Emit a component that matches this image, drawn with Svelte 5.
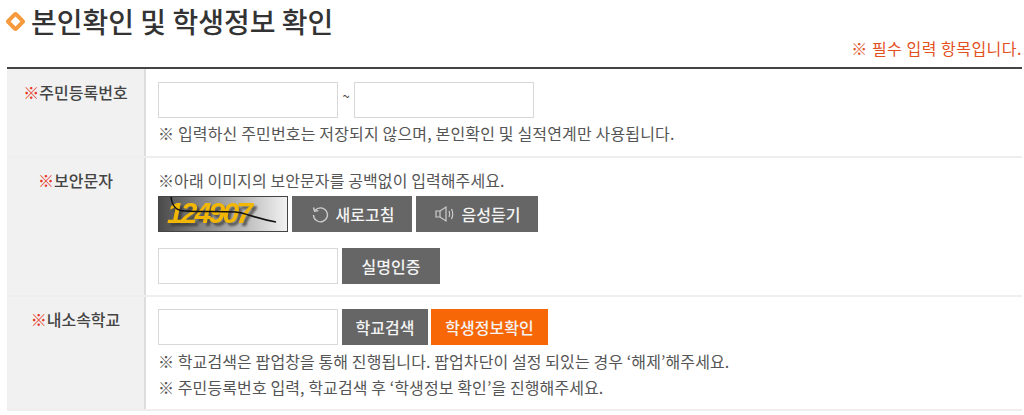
<script>
  const captchaCode = '124907';
</script>

<div class="page">
  <h2 class="title">
    <span class="bullet"></span>본인확인 및 학생정보 확인
  </h2>
  <p class="required">※ 필수 입력 항목입니다.</p>

  <div class="table">
    <div class="row row1">
      <div class="head"><em>※</em>주민등록번호</div>
      <div class="body">
        <div class="line">
          <input class="input" />
          <span class="tilde">~</span>
          <input class="input" />
        </div>
        <p class="note first">※ 입력하신 주민번호는 저장되지 않으며, 본인확인 및 실적연계만 사용됩니다.</p>
      </div>
    </div>

    <div class="row row2">
      <div class="head"><em>※</em>보안문자</div>
      <div class="body">
        <p class="note top">※아래 이미지의 보안문자를 공백없이 입력해주세요.</p>
        <div class="line captchaLine">
          <svg class="captcha" width="130" height="36" viewBox="0 0 130 36">
            <defs>
              <linearGradient id="capBg" x1="0" x2="1" y1="0" y2="0">
                <stop offset="0" stop-color="#4a4a4a" />
                <stop offset="0.5" stop-color="#a0a0a0" />
                <stop offset="1" stop-color="#f2f2f2" />
              </linearGradient>
            </defs>
            <rect x="0.5" y="0.5" width="129" height="35" fill="url(#capBg)" stroke="#444" />
            <text class="capText" x="9" y="27" textLength="86">{captchaCode}</text>
            <path d="M13 1 C14 9 17 15 27 15 C45 16 60 15 78 16 C88 17 96 22 118 26" fill="none" stroke="#111" stroke-width="1.6" />
          </svg>
          <button class="btn gray refresh">
            <svg width="20" height="20" viewBox="0 0 20 20" fill="none" stroke="#ccc" stroke-width="1.4">
              <path d="M5 6.5 A7 7 0 1 1 3.5 11" />
              <path d="M3.5 3.5 L4.6 7.2 L8.4 6.6" />
            </svg>
            새로고침
          </button>
          <button class="btn gray listen">
            <svg width="22" height="18" viewBox="0 0 22 18" fill="none" stroke="#ccc" stroke-width="1.2">
              <path d="M2 6 H6 L12 2 V16 L6 12 H2 Z" />
              <path d="M6 6 V12" />
              <path d="M15 6 Q16.5 9 15 12" />
              <path d="M17.5 4 Q20 9 17.5 14" />
            </svg>
            음성듣기
          </button>
        </div>
        <div class="line verify">
          <input class="input" />
          <button class="btn gray verifyBtn">실명인증</button>
        </div>
      </div>
    </div>

    <div class="row row3">
      <div class="head"><em>※</em>내소속학교</div>
      <div class="body">
        <div class="line school">
          <input class="input" />
          <button class="btn gray searchBtn">학교검색</button>
          <button class="btn orange">학생정보확인</button>
        </div>
        <p class="note second">※ 학교검색은 팝업창을 통해 진행됩니다. 팝업차단이 설정 되있는 경우 ‘해제’해주세요.</p>
        <p class="note third">※ 주민등록번호 입력, 학교검색 후 ‘학생정보 확인’을 진행해주세요.</p>
      </div>
    </div>
  </div>
</div>

<style>
  :global(body) {
    margin: 0;
    background: #fff;
    font-family: "Noto Sans CJK KR", "Noto Sans", sans-serif;
  }

  .page {
    width: 1024px;
    height: 415px;
    padding: 0 2px 0 7px;
    box-sizing: border-box;
    overflow: hidden;
    color: #444;
  }

  .title {
    display: flex;
    align-items: center;
    gap: 8px;
    margin: 0;
    height: 42px;
    font-size: 28px;
    font-weight: 500;
    letter-spacing: 0;
    color: #333;
  }
  .bullet {
    width: 7px;
    height: 7px;
    margin-left: 1px;
    border: 4px solid #f79a3e;
    background: #fff;
    transform: rotate(45deg);
    border-radius: 3px;
  }

  .required {
    margin: 0;
    height: 25px;
    line-height: 12px;
    text-align: right;
    font-size: 16px;
    letter-spacing: 0.5px;
    color: #e2501e;
  }

  .table { border-top: 2px solid #444; }

  .row {
    display: flex;
    border-bottom: 2px solid #eee;
    box-sizing: border-box;
  }
  .row1 { height: 89px; }
  .row2 { height: 139px; }
  .row3 { height: 114px; }

  .head {
    width: 139px;
    flex: none;
    box-sizing: border-box;
    background: #f1f1f1;
    border-right: 2px solid #ddd;
    text-align: center;
    font-size: 16px;
    font-weight: 500;
    color: #444;
    padding-top: 12px;
    line-height: 22px;
  }
  .row2 .head, .row3 .head { padding-top: 11px; }
  .head em {
    font-style: normal;
    color: #e8331c;
  }

  .body {
    flex: 1;
    padding: 13px 0 0 12px;
  }
  .row3 .body { padding-top: 12px; }

  .line {
    display: flex;
    align-items: center;
    gap: 3px;
  }

  .input {
    width: 180px;
    height: 36px;
    margin: 0;
    padding: 0;
    box-sizing: border-box;
    border: 1px solid #d8d8d8;
    background: #fff;
  }
  .tilde {
    width: 16px;
    margin: 0 -3px 8px;
    text-align: center;
    font-size: 13px;
    line-height: 14px;
  }

  .note {
    margin: 0;
    font-size: 16px;
    line-height: 20px;
    letter-spacing: 0.1px;
    color: #555;
    white-space: nowrap;
  }
  .first { margin-top: 5px; letter-spacing: 0.16px; }
  .top { margin-top: -1px; margin-bottom: 6px; }
  .second { margin-top: 6px; }
  .third { margin-top: 6px; }

  .captchaLine { gap: 4px; }
  .verify { margin-top: 16px; gap: 4px; }
  .school .searchBtn { margin-left: 1px; }

  .btn {
    height: 36px;
    padding: 0;
    border: 0;
    font-family: inherit;
    font-size: 16px;
    font-weight: 500;
    color: #f4f4f4;
    display: inline-flex;
    align-items: center;
    justify-content: center;
    gap: 6px;
    white-space: nowrap;
  }
  .gray { background: #666; }
  .orange { background: #f76707; width: 117px; }
  .refresh { width: 120px; }
  .listen { width: 122px; }
  .verifyBtn { width: 98px; }
  .searchBtn { width: 86px; }

  .captcha { flex: none; display: block; }
  .capText {
    font-family: "Liberation Sans", sans-serif;
    font-size: 30px;
    font-weight: 700;
    font-style: italic;
    fill: #f2b705;
    filter: drop-shadow(3px 3px 1px rgba(50, 50, 50, 0.7));
  }
</style>
